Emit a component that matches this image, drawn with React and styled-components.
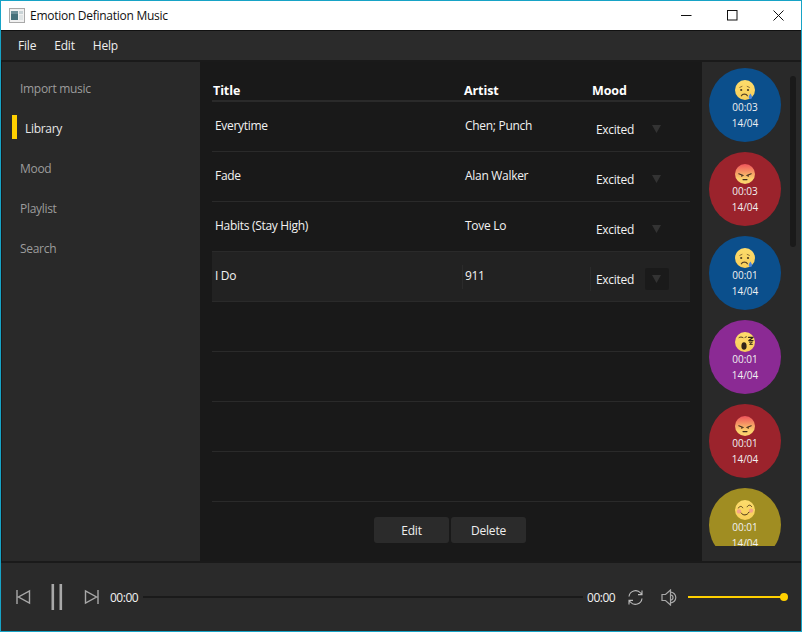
import React from "react";
import styled, { createGlobalStyle } from "styled-components";

const GlobalStyle = createGlobalStyle`
  html, body {
    margin: 0;
    padding: 0;
    background: #1a1a1a;
  }
  * {
    box-sizing: border-box;
  }
`;

const Window = styled.div`
  width: 802px;
  height: 632px;
  display: flex;
  flex-direction: column;
  overflow: hidden;
  border: 1px solid #17a3c6;
  background: #1a1a1a;
  font-family: "Open Sans", "Noto Sans", sans-serif;
  font-size: 12px;
  letter-spacing: -0.3px;
  color: #f2f2f2;
`;

const TitleBar = styled.div`
  height: 30px;
  flex: none;
  display: flex;
  align-items: center;
  background: #fff;
  color: #111;
  padding-left: 8px;
  border-bottom: 1px solid #111;
`;

const AppTitle = styled.span`
  margin-left: 5px;
  letter-spacing: -0.27px;
`;

const WinButtons = styled.div`
  margin-left: auto;
  display: flex;
`;

const WinButton = styled.div`
  width: 46px;
  height: 29px;
  display: flex;
  align-items: center;
  justify-content: center;
`;

const MenuBar = styled.div`
  height: 29px;
  flex: none;
  display: flex;
  align-items: center;
  gap: 18px;
  padding-left: 17px;
  background: #2b2b2b;
`;

const MenuItem = styled.span`
  color: #efefef;
  letter-spacing: -0.2px;
`;

const Body = styled.div`
  flex: 1;
  min-height: 0;
  display: flex;
  padding: 2px 0 2px 1px;
`;

const Sidebar = styled.nav`
  width: 198px;
  flex: none;
  display: flex;
  flex-direction: column;
  padding-top: 5px;
  background: #292929;
`;

const NavItem = styled.div`
  height: 40px;
  display: flex;
  align-items: center;
  padding-left: ${(p) => (p.$active ? "10px" : "18px")};
  color: ${(p) => (p.$active ? "#e6e6e6" : "#9c9c9c")};
`;

const NavLabel = styled.span`
  padding-top: 2px;
`;

const NavMarker = styled.span`
  width: 5px;
  height: 24px;
  margin-right: 8px;
  background: #ffd000;
`;

const Main = styled.main`
  flex: 1;
  min-width: 0;
  display: flex;
  flex-direction: column;
  padding: 20px 12px 0 12px;
  background: #191919;
`;

const HeaderRow = styled.div`
  height: 20px;
  display: grid;
  grid-template-columns: 251px 128px 99px;
  border-bottom: 2px solid #2a2a2a;
  font-weight: 700;
  font-size: 12.5px;
  color: #fff;
  line-height: 18px;
  letter-spacing: -0.1px;
  padding-left: 1px;
`;

const Row = styled.div`
  height: 50px;
  display: grid;
  grid-template-columns: 250px 128px 100px;
  align-items: center;
  border-bottom: 1px solid #2a2a2a;
  background: ${(p) => (p.$selected ? "#222222" : "transparent")};
`;

const Cell = styled.div`
  height: 24px;
  line-height: 22px;
  padding-left: 2px;
  border-left: 1px solid ${(p) => (p.$divider ? "#2b2b2b" : "transparent")};
`;

const MoodCell = styled.div`
  height: 24px;
  margin-top: 5px;
  display: flex;
  align-items: center;
  padding-left: 5px;
  border-left: 1px solid ${(p) => (p.$divider ? "#2b2b2b" : "transparent")};
`;

const MoodArrow = styled.div`
  width: 24px;
  height: 22px;
  margin-left: 11px;
  display: flex;
  align-items: center;
  justify-content: center;
  border-radius: 2px;
  background: ${(p) => (p.$selected ? "#1a1a1a" : "transparent")};
`;

const Actions = styled.div`
  margin-top: 15px;
  padding-right: 2px;
  display: flex;
  justify-content: center;
  gap: 2px;
`;

const ActionButton = styled.button`
  width: 75px;
  height: 26px;
  padding: 0;
  border: 0;
  border-radius: 3px;
  background: #2b2b2b;
  color: #efefef;
  font: inherit;
  letter-spacing: -0.2px;
`;

const MoodPanel = styled.aside`
  position: relative;
  width: 99px;
  flex: none;
  background: #292929;
`;

const MoodList = styled.div`
  height: 484px;
  overflow: hidden;
  display: flex;
  flex-direction: column;
  gap: 10px;
  padding: 6px 0 0 7px;
`;

const Bubble = styled.div`
  width: 72px;
  height: 74px;
  flex: none;
  display: flex;
  flex-direction: column;
  align-items: center;
  padding-top: 12px;
  border-radius: 50%;
  background: ${(p) => p.$color};
  font-size: 10px;
  line-height: 16px;
  letter-spacing: 0;
  color: #f1f1f1;
`;

const BubbleFace = styled.svg`
  width: 20px;
  height: 20px;
  margin-bottom: -1px;
  display: block;
  flex: none;
`;

const Scrollbar = styled.div`
  position: absolute;
  left: 88px;
  top: 14px;
  width: 6px;
  height: 171px;
  border-radius: 3px;
  background: #1a1a1a;
`;

const Player = styled.footer`
  height: 68px;
  flex: none;
  display: flex;
  align-items: center;
  padding: 0 0 0 14px;
  background: #2a2a2a;
`;

const PlayerIcon = styled.svg`
  display: block;
  flex: none;
  margin-left: ${(p) => p.$gap || 0}px;
`;

const Time = styled.span`
  flex: none;
  font-size: 12px;
  letter-spacing: -0.5px;
  margin-left: ${(p) => p.$gap}px;
  color: #f2f2f2;
`;

const Track = styled.div`
  flex: none;
  width: 440px;
  height: 2px;
  margin-left: 5px;
  background: #1a1a1a;
`;

const Volume = styled.div`
  position: relative;
  flex: none;
  width: 96px;
  height: 2px;
  margin-left: 10px;
  background: #ffd000;
`;

const VolumeThumb = styled.span`
  position: absolute;
  right: -4px;
  top: -3px;
  width: 8px;
  height: 8px;
  border-radius: 50%;
  background: #ffd000;
`;

const songs = [
  { title: "Everytime", artist: "Chen; Punch" },
  { title: "Fade", artist: "Alan Walker" },
  { title: "Habits (Stay High)", artist: "Tove Lo" },
  { title: "I Do", artist: "911", selected: true },
];

const moods = [
  { kind: "sad", color: "#0b4f8c", time: "00:03" },
  { kind: "angry", color: "#9b232c", time: "00:03" },
  { kind: "sad", color: "#0b4f8c", time: "00:01" },
  { kind: "sleepy", color: "#8b2a94", time: "00:01" },
  { kind: "angry", color: "#9b232c", time: "00:01" },
  { kind: "happy", color: "#a08d22", time: "00:01" },
];

function Face({ kind, id }) {
  const angry = kind === "angry";
  return (
    <BubbleFace viewBox="0 0 20 20">
      <defs>
        <linearGradient id={id} x1="0" y1="0" x2="0" y2="1">
          <stop offset="0" stopColor={angry ? "#f0545c" : "#fddc6c"} />
          <stop offset={angry ? "0.75" : "1"} stopColor={angry ? "#fbd26d" : "#f8cf5a"} />
        </linearGradient>
      </defs>
      <circle cx="10" cy="10" r="10" fill={`url(#${id})`} />
      {kind === "sad" && (
        <g fill="none" stroke="#5a4526" strokeLinecap="round">
          <circle cx="6.2" cy="10" r="1.1" fill="#4a3a20" stroke="none" />
          <circle cx="13" cy="10" r="1.1" fill="#4a3a20" stroke="none" />
          <path d="M4.8 7.4 7 6.4M14.4 7.4 12.2 6.4" strokeWidth="0.7" />
          <path d="M6.4 15.8C7.4 13.6 11.4 13.6 12.4 15.8" strokeWidth="1.2" />
          <path d="M15.4 13.6c1.2 1.8 1.7 2.8 1.7 3.6a1.7 1.7 0 0 1-3.4 0c0-.8.5-1.8 1.7-3.6Z" fill="#4f86dc" stroke="none" />
        </g>
      )}
      {angry && (
        <g fill="none" stroke="#3f2c1c" strokeLinecap="round">
          <path d="M3.8 9.8 8.2 11.4M16.2 9.8 11.8 11.4" strokeWidth="1.1" />
          <circle cx="6.8" cy="12" r="0.8" fill="#3f2c1c" stroke="none" />
          <circle cx="13.2" cy="12" r="0.8" fill="#3f2c1c" stroke="none" />
          <path d="M8 15.6h4" strokeWidth="1.1" />
        </g>
      )}
      {kind === "sleepy" && (
        <g fill="none" stroke="#3f2c1c" strokeLinecap="round">
          <path d="M4 5.6C5.2 4.8 6.6 4.8 8 5.6M10 5.4 11.4 4.8" strokeWidth="0.9" />
          <ellipse cx="9" cy="14" rx="2.6" ry="3.8" fill="#2f2418" stroke="none" />
          <path d="M13.6 5.4h4.4L13.8 8.6h4.2" stroke="#2f2418" strokeWidth="1.2" strokeLinejoin="round" />
          <path d="M14.4 10.2h3L14.6 12.4h2.8" stroke="#2f2418" strokeWidth="0.9" strokeLinejoin="round" />
        </g>
      )}
      {kind === "happy" && (
        <g fill="none" stroke="#4a3415" strokeWidth="0.9" strokeLinecap="round">
          <circle cx="4" cy="11.4" r="2.2" fill="#f5a38a" stroke="none" />
          <circle cx="16" cy="10.6" r="2.2" fill="#f5a38a" stroke="none" />
          <path d="M3.4 8C4.4 5.8 6.8 5.8 7.8 7.8M12.2 6.8C13.2 4.6 15.6 4.6 16.6 6.6" />
          <path d="M6.2 13c1.6 2.8 5.8 2.8 7.8-.8" strokeWidth="1" />
        </g>
      )}
    </BubbleFace>
  );
}

function App() {
  return (
    <Window>
      <GlobalStyle />
      <TitleBar>
        <svg width="16" height="15" viewBox="0 0 16 15">
          <rect x="0.5" y="0.5" width="15" height="14" fill="#f1f1f1" stroke="#a9a9a9" />
          <rect x="2" y="3" width="7" height="9" fill="#46707a" />
          <rect x="2" y="3" width="7" height="3" fill="#6d8f98" />
          <rect x="10" y="3" width="4" height="3" fill="#c9d3d6" />
          <rect x="10" y="7" width="4" height="5" fill="#dfe4e5" />
        </svg>
        <AppTitle>Emotion Defination Music</AppTitle>
        <WinButtons>
          <WinButton>
            <svg width="11" height="11" viewBox="0 0 11 11">
              <path d="M0 5.5h10.5" stroke="#111" />
            </svg>
          </WinButton>
          <WinButton>
            <svg width="11" height="11" viewBox="0 0 11 11">
              <rect x="0.5" y="0.5" width="9.5" height="9.5" fill="none" stroke="#111" />
            </svg>
          </WinButton>
          <WinButton>
            <svg width="11" height="11" viewBox="0 0 11 11">
              <path d="M0.5 0.5 10.5 10.5M10.5 0.5 0.5 10.5" stroke="#111" />
            </svg>
          </WinButton>
        </WinButtons>
      </TitleBar>

      <MenuBar>
        <MenuItem>File</MenuItem>
        <MenuItem>Edit</MenuItem>
        <MenuItem>Help</MenuItem>
      </MenuBar>

      <Body>
        <Sidebar>
          <NavItem><NavLabel>Import music</NavLabel></NavItem>
          <NavItem $active>
            <NavMarker />
            <NavLabel>Library</NavLabel>
          </NavItem>
          <NavItem><NavLabel>Mood</NavLabel></NavItem>
          <NavItem><NavLabel>Playlist</NavLabel></NavItem>
          <NavItem><NavLabel>Search</NavLabel></NavItem>
        </Sidebar>

        <Main>
          <HeaderRow>
            <span>Title</span>
            <span>Artist</span>
            <span>Mood</span>
          </HeaderRow>
          {songs.map((song) => (
            <Row key={song.title} $selected={song.selected}>
              <Cell>{song.title}</Cell>
              <Cell $divider={song.selected}>{song.artist}</Cell>
              <MoodCell $divider={song.selected}>
                Excited
                <MoodArrow $selected={song.selected}>
                  <svg width="9" height="8" viewBox="0 0 9 8">
                    <path d="M0 0h9L4.5 8Z" fill="#333" />
                  </svg>
                </MoodArrow>
              </MoodCell>
            </Row>
          ))}
          <Row />
          <Row />
          <Row />
          <Row />
          <Actions>
            <ActionButton>Edit</ActionButton>
            <ActionButton>Delete</ActionButton>
          </Actions>
        </Main>

        <MoodPanel>
          <MoodList>
            {moods.map((mood, i) => (
              <Bubble key={i} $color={mood.color}>
                <Face kind={mood.kind} id={`face-${i}`} />
                <span>{mood.time}</span>
                <span>14/04</span>
              </Bubble>
            ))}
          </MoodList>
          <Scrollbar />
        </MoodPanel>
      </Body>

      <Player>
        <PlayerIcon width="16" height="16" viewBox="0 0 16 16" fill="none" stroke="#a8a8a8" strokeWidth="1.4">
          <path d="M2 1v14M14.5 2v12L3.5 8Z" />
        </PlayerIcon>
        <PlayerIcon $gap={20} width="12" height="26" viewBox="0 0 12 26" fill="#a8a8a8">
          <rect x="0.5" y="0" width="2.6" height="26" />
          <rect x="8.5" y="0" width="2.6" height="26" />
        </PlayerIcon>
        <PlayerIcon $gap={21} width="16" height="16" viewBox="0 0 16 16" fill="none" stroke="#a8a8a8" strokeWidth="1.4">
          <path d="M14 1v14M1.5 2v12L12.5 8Z" />
        </PlayerIcon>
        <Time $gap={10}>00:00</Time>
        <Track />
        <Time $gap={4}>00:00</Time>
        <PlayerIcon $gap={12} width="17" height="17" viewBox="0 0 17 17" fill="none" stroke="#bcbcbc" strokeWidth="1.1">
          <path d="M2 7.5A6.6 6.6 0 0 1 13.6 4L15 5.5M15 1.6v4h-4" />
          <path d="M15 9.5A6.6 6.6 0 0 1 3.4 13L2 11.5M2 15.4v-4h4" />
        </PlayerIcon>
        <PlayerIcon $gap={17} width="17" height="17" viewBox="0 0 17 17" fill="none" stroke="#a8a8a8" strokeWidth="1.2">
          <path d="M1 5.5h3.5L9.5 1v15L4.5 11.5H1Z" />
          <path d="M9.5 3.2a5.3 5.3 0 0 1 0 10.6M9.5 6a2.5 2.5 0 0 1 0 5" />
        </PlayerIcon>
        <Volume>
          <VolumeThumb />
        </Volume>
      </Player>
    </Window>
  );
}

export default App;
